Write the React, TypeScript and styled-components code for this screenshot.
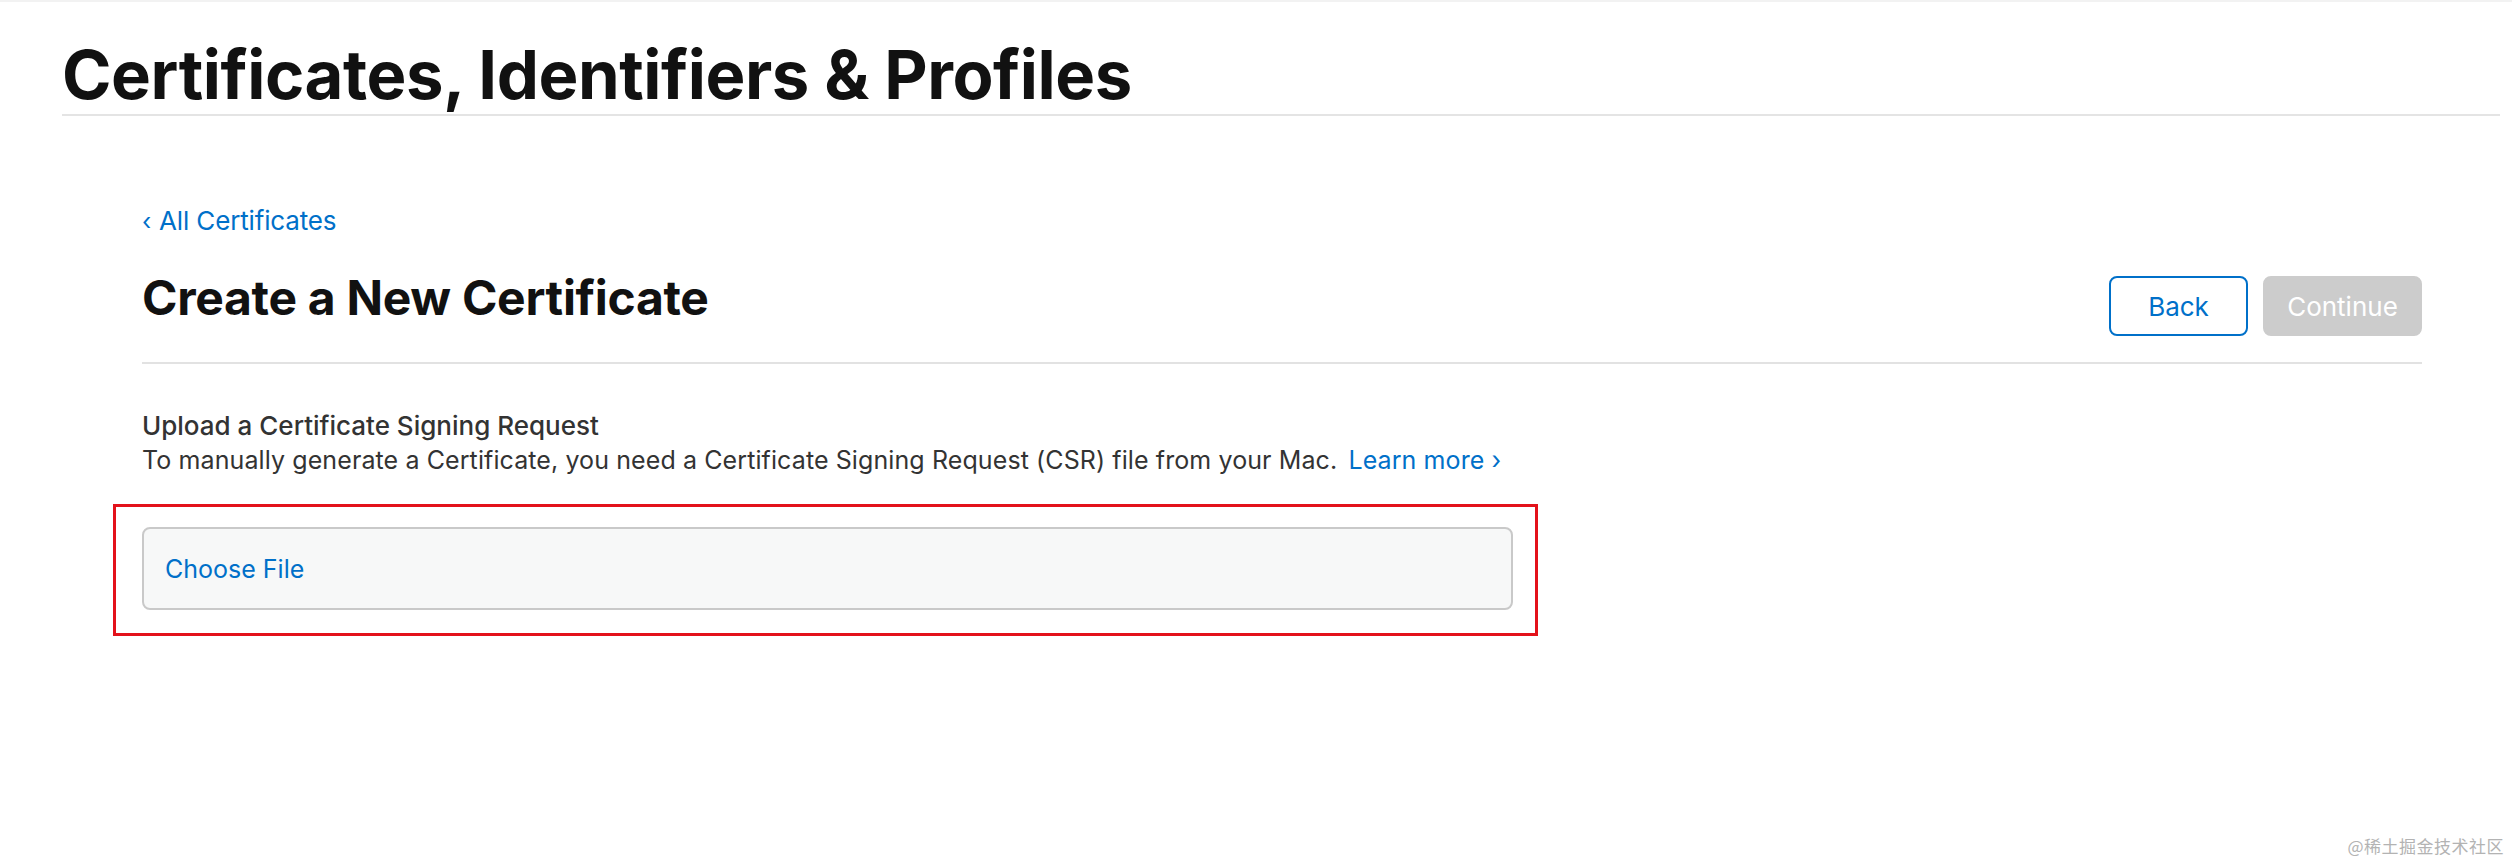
import React from "react";
import styled, { createGlobalStyle } from "styled-components";

const GlobalStyle = createGlobalStyle`
  html, body {
    margin: 0;
    padding: 0;
    background: #ffffff;
  }
  body {
    font-family: Inter, "Noto Sans", sans-serif;
    -webkit-font-smoothing: antialiased;
  }
`;

const Page = styled.div`
  position: relative;
  width: 2512px;
  height: 864px;
  overflow: hidden;
  box-sizing: border-box;
  border-top: 2px solid #f2f2f2;
  background: #ffffff;
`;

const Header = styled.header`
  margin: 0 12px 0 62px;
  padding: 40px 0 6px;
  border-bottom: 2px solid #e4e4e4;
`;

const PageTitle = styled.h1`
  margin: 0;
  font-family: Inter, "Liberation Sans", sans-serif;
  font-weight: 700;
  font-size: 67px;
  line-height: 66px;
  letter-spacing: -0.45px;
  color: #111111;
`;

const Main = styled.main`
  margin: 0 90px 0 142px;
  display: flex;
  flex-direction: column;
  align-items: flex-start;
`;

const BackLink = styled.a`
  margin-top: 92px;
  display: inline-flex;
  align-items: baseline;
  gap: 8px;
  font-size: 26px;
  line-height: 26px;
  letter-spacing: -0.15px;
  color: #0070c9;
  text-decoration: none;
  cursor: pointer;
`;

const Chevron = styled.span`
  font-size: 24px;
`;

const TitleRow = styled.div`
  align-self: stretch;
  margin-top: 38px;
  padding-bottom: 26px;
  border-bottom: 2px solid #e2e2e2;
  display: flex;
  justify-content: space-between;
  align-items: flex-start;
`;

const SectionTitle = styled.h2`
  margin: 0;
  font-weight: 700;
  font-size: 48px;
  line-height: 49px;
  letter-spacing: -0.3px;
  color: #111111;
`;

const Actions = styled.div`
  margin-top: 3px;
  display: flex;
  gap: 15px;
`;

const Button = styled.button<{ $primary?: boolean; $w: number }>`
  box-sizing: border-box;
  width: ${(p) => p.$w}px;
  height: 60px;
  border-radius: 8px;
  font-family: Inter, "Noto Sans", sans-serif;
  font-size: 26px;
  font-weight: 400;
  display: flex;
  align-items: center;
  justify-content: center;
  cursor: pointer;
  border: 2px solid ${(p) => (p.$primary ? "#cccccc" : "#0070c9")};
  background: ${(p) => (p.$primary ? "#cccccc" : "#ffffff")};
  color: ${(p) => (p.$primary ? "#ffffff" : "#0070c9")};
`;

const FieldLabel = styled.div`
  margin-top: 44px;
  font-size: 26px;
  line-height: 35px;
  font-weight: 500;
  color: #333333;
`;

const Description = styled.p`
  margin: 0;
  font-size: 25px;
  line-height: 35px;
  letter-spacing: 0.1px;
  color: #333333;
`;

const LearnMore = styled.a`
  margin-left: 4px;
  color: #0070c9;
  text-decoration: none;
  cursor: pointer;
`;

const Highlight = styled.div`
  margin-top: 26px;
  margin-left: -29px;
  padding: 20px 22px 23px 26px;
  border: 3px solid #e3121b;
`;

const FileInput = styled.label`
  box-sizing: border-box;
  width: 1371px;
  height: 83px;
  display: flex;
  align-items: center;
  padding-left: 21px;
  border: 2px solid #c9c9c9;
  border-radius: 8px;
  background: #f7f8f8;
  font-size: 25px;
  color: #0070c9;
  cursor: pointer;
`;

const Watermark = styled.div`
  position: absolute;
  right: 8px;
  bottom: 6px;
  font-family: "Noto Sans CJK SC", sans-serif;
  font-size: 17px;
  color: #b3b3b3;
  letter-spacing: 0.5px;
`;

export default function App() {
  return (
    <>
      <GlobalStyle />
      <Page>
        <Header>
          <PageTitle>Certificates, Identifiers &amp; Profiles</PageTitle>
        </Header>
        <Main>
          <BackLink>
            <Chevron>‹</Chevron>
            All Certificates
          </BackLink>
          <TitleRow>
            <SectionTitle>Create a New Certificate</SectionTitle>
            <Actions>
              <Button $w={139}>Back</Button>
              <Button $w={159} $primary>
                Continue
              </Button>
            </Actions>
          </TitleRow>
          <FieldLabel>Upload a Certificate Signing Request</FieldLabel>
          <Description>
            To manually generate a Certificate, you need a Certificate Signing Request (CSR) file from your Mac.
            <LearnMore> Learn more ›</LearnMore>
          </Description>
          <Highlight>
            <FileInput>Choose File</FileInput>
          </Highlight>
        </Main>
        <Watermark>@稀土掘金技术社区</Watermark>
      </Page>
    </>
  );
}
